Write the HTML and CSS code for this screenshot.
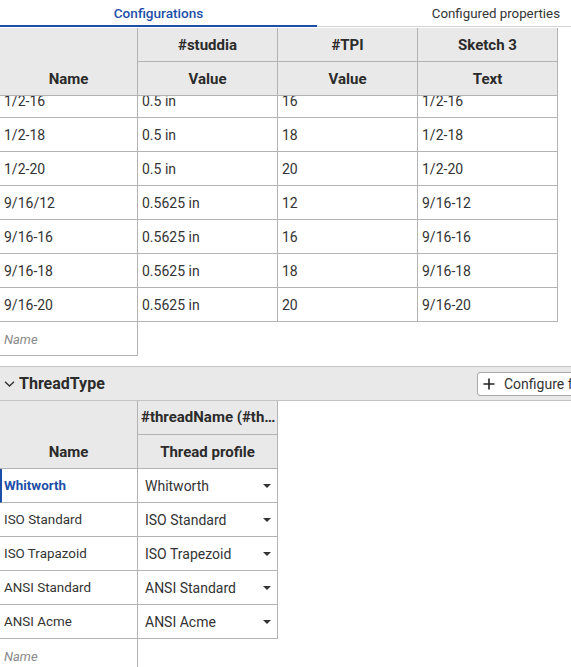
FILE: index.html
```html
<!DOCTYPE html>
<html>
<head>
<meta charset="utf-8">
<link rel="stylesheet" href="styles.css">
</head>
<body>
<div class="tabs">
  <div class="tab active">Configurations</div>
  <div class="tab">Configured properties</div>
</div>

<div class="grid g4 head">
  <div class="hc name-h">Name</div>
  <div class="hc">#studdia</div>
  <div class="hc">#TPI</div>
  <div class="hc">Sketch 3</div>
  <div class="hc">Value</div>
  <div class="hc">Value</div>
  <div class="hc">Text</div>
</div>
<div class="scroll">
  <div class="grid g4 body shifted">
    <div class="c">1/2-16</div><div class="c">0.5 in</div><div class="c">16</div><div class="c">1/2-16</div>
    <div class="c">1/2-18</div><div class="c">0.5 in</div><div class="c">18</div><div class="c">1/2-18</div>
    <div class="c">1/2-20</div><div class="c">0.5 in</div><div class="c">20</div><div class="c">1/2-20</div>
    <div class="c">9/16/12</div><div class="c">0.5625 in</div><div class="c">12</div><div class="c">9/16-12</div>
    <div class="c">9/16-16</div><div class="c">0.5625 in</div><div class="c">16</div><div class="c">9/16-16</div>
    <div class="c">9/16-18</div><div class="c">0.5625 in</div><div class="c">18</div><div class="c">9/16-18</div>
    <div class="c">9/16-20</div><div class="c">0.5625 in</div><div class="c">20</div><div class="c">9/16-20</div>
    <div class="c ph">Name</div>
  </div>
</div>

<div class="section">
  <div class="sec-title">
    <svg class="chev" width="11" height="6" viewBox="0 0 11 6"><path d="M1 0.8 L5.5 5 L10 0.8" fill="none" stroke="#333" stroke-width="1.4"/></svg>
    <span>ThreadType</span>
  </div>
  <div class="btn">
    <svg width="12" height="12" viewBox="0 0 12 12"><path d="M6 0.5 V11.5 M0.5 6 H11.5" stroke="#222" stroke-width="1.6"/></svg>
    <span>Configure feature</span>
  </div>
</div>

<div class="grid g2 head">
  <div class="hc name-h">Name</div>
  <div class="hc ell">#threadName (#threadType)</div>
  <div class="hc">Thread profile</div>
</div>
<div class="grid g2 body small">
  <div class="c sel">Whitworth</div><div class="c dd"><span>Whitworth</span><i class="caret"></i></div>
  <div class="c">ISO Standard</div><div class="c dd"><span>ISO Standard</span><i class="caret"></i></div>
  <div class="c">ISO Trapazoid</div><div class="c dd"><span>ISO Trapezoid</span><i class="caret"></i></div>
  <div class="c">ANSI Standard</div><div class="c dd"><span>ANSI Standard</span><i class="caret"></i></div>
  <div class="c">ANSI Acme</div><div class="c dd"><span>ANSI Acme</span><i class="caret"></i></div>
  <div class="c ph">Name</div>
</div>
</body>
</html>
```
FILE: styles.css
```css
* { box-sizing: border-box; }
html, body { margin: 0; padding: 0; background: #fff; overflow: hidden; }
body {
  width: 571px;
  height: 667px;
  font-family: Roboto, "Liberation Sans", sans-serif;
  font-size: 14px;
  color: #333;
}
.tabs {
  display: flex;
  height: 28px;
  padding-bottom: 1px;
}
.tab {
  height: 27px;
  border-bottom: 1px solid #d4d4d4;
  display: flex;
  align-items: center;
  font-size: 13.3px;
  color: #333;
}
.tab:first-child {
  width: 317px;
  justify-content: center;
  color: #1d4fa8;
  font-weight: 500;
  font-size: 13.6px;
  border-bottom: 2px solid #1d4fa8;
}
.tab:last-child {
  flex: 1;
  justify-content: flex-end;
  padding-right: 11px;
  padding-top: 1px;
}
.grid { display: grid; }
.g4 { grid-template-columns: 138px 140px 140px 140px; width: 558px; }
.g2 { grid-template-columns: 138px 140px; width: 278px; }
.head .hc {
  background: #e9e9e9;
  height: 34px;
  border-right: 1px solid #b3b3b3;
  border-bottom: 1px solid #b3b3b3;
  display: flex;
  align-items: center;
  justify-content: center;
  font-weight: 700;
  font-size: 15px;
  color: #2b2b2b;
}
.head .name-h {
  grid-row: span 2;
  height: 68px;
  align-items: flex-end;
  padding-bottom: 7px;
}
.hc.ell {
  display: block;
  white-space: nowrap;
  overflow: hidden;
  text-overflow: ellipsis;
  line-height: 32px;
  padding: 0 1px 0 3px;
  text-align: center;
}
.scroll {
  height: 261px;
  overflow: hidden;
}
.shifted { margin-top: -12px; }
.body .c {
  height: 34px;
  border-right: 1px solid #b3b3b3;
  border-bottom: 1px solid #b3b3b3;
  display: flex;
  align-items: center;
  padding-left: 4px;
  font-size: 14px;
  color: #333;
}
.body.small .c { font-size: 13.4px; }
.body .c.ph {
  font-style: italic;
  color: #8a8a8a;
  font-size: 13px;
  grid-column: 1;
  padding-top: 2px;
}
.body .c.sel {
  color: #1d4fa8;
  font-weight: 700;
  border-left: 2px solid #1d4fa8;
  padding-left: 2px;
}
.body .c.dd {
  padding-left: 7px;
  padding-right: 6px;
  justify-content: space-between;
  font-size: 14px;
}
.caret {
  width: 0;
  height: 0;
  border-left: 4px solid transparent;
  border-right: 4px solid transparent;
  border-top: 4px solid #333;
}
.section {
  margin-top: 9px;
  height: 35px;
  background: #e9e9e9;
  border-top: 1px solid #c4c4c4;
  border-bottom: 1px solid #c4c4c4;
  display: flex;
  align-items: center;
  justify-content: space-between;
  overflow: hidden;
}
.sec-title {
  display: flex;
  align-items: center;
  gap: 4px;
  padding-left: 4px;
  font-weight: 700;
  font-size: 16px;
  color: #2b2b2b;
}
.btn {
  flex: none;
  display: flex;
  align-items: center;
  gap: 9px;
  width: 150px;
  height: 24px;
  margin-right: -56px;
  padding: 0 0 0 5px;
  background: #fff;
  border: 1px solid #a8a8a8;
  border-radius: 3px;
  font-size: 14px;
  color: #333;
  white-space: nowrap;
}
```
